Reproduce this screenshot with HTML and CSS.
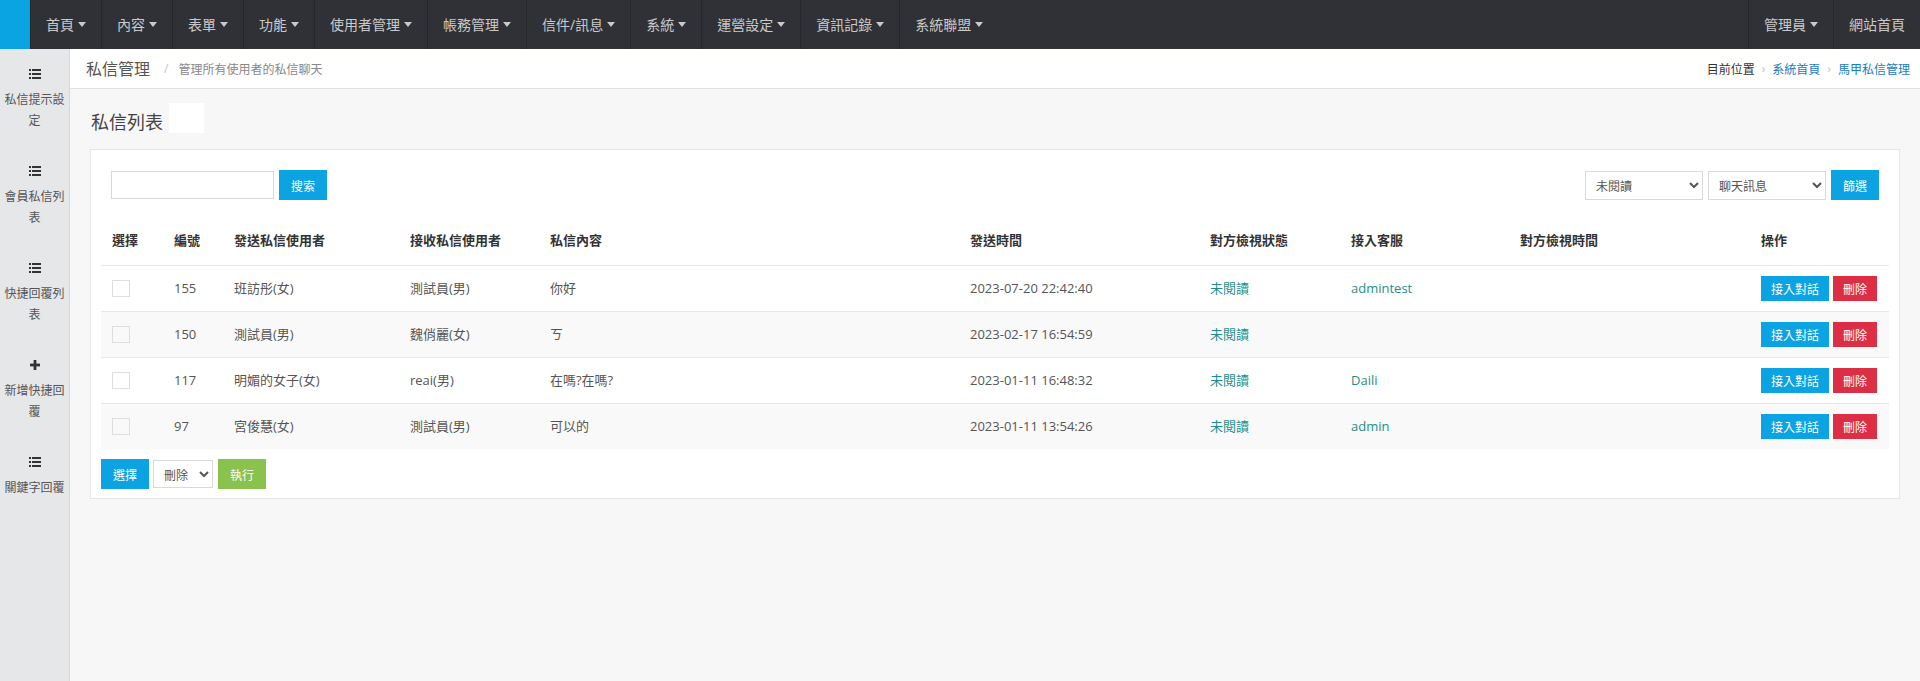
FILE: index.html
```html
<!DOCTYPE html>
<html lang="zh-Hant">
<head>
<meta charset="utf-8">
<title>私信管理</title>
<link rel="stylesheet" href="styles.css">
</head>
<body>
<header class="topnav">
  <div class="brand"></div>
  <nav class="menu">
    <a class="menu-item">首頁<i class="caret"></i></a>
    <a class="menu-item">內容<i class="caret"></i></a>
    <a class="menu-item">表單<i class="caret"></i></a>
    <a class="menu-item">功能<i class="caret"></i></a>
    <a class="menu-item">使用者管理<i class="caret"></i></a>
    <a class="menu-item">帳務管理<i class="caret"></i></a>
    <a class="menu-item">信件/訊息<i class="caret"></i></a>
    <a class="menu-item">系統<i class="caret"></i></a>
    <a class="menu-item">運營設定<i class="caret"></i></a>
    <a class="menu-item">資訊記錄<i class="caret"></i></a>
    <a class="menu-item">系統聯盟<i class="caret"></i></a>
  </nav>
  <nav class="menu menu-right">
    <a class="menu-item">管理員<i class="caret"></i></a>
    <a class="menu-item">網站首頁</a>
  </nav>
</header>

<div class="layout">
  <aside class="sidebar">
    <a class="side-item">
      <svg class="ico" width="12" height="10" viewBox="0 0 12 10"><rect x="0" y="0" width="2" height="2"/><rect x="3" y="0" width="9" height="2"/><rect x="0" y="4" width="2" height="2"/><rect x="3" y="4" width="9" height="2"/><rect x="0" y="8" width="2" height="2"/><rect x="3" y="8" width="9" height="2"/></svg>
      <span class="side-text">私信提示設定</span>
    </a>
    <a class="side-item">
      <svg class="ico" width="12" height="10" viewBox="0 0 12 10"><rect x="0" y="0" width="2" height="2"/><rect x="3" y="0" width="9" height="2"/><rect x="0" y="4" width="2" height="2"/><rect x="3" y="4" width="9" height="2"/><rect x="0" y="8" width="2" height="2"/><rect x="3" y="8" width="9" height="2"/></svg>
      <span class="side-text">會員私信列表</span>
    </a>
    <a class="side-item">
      <svg class="ico" width="12" height="10" viewBox="0 0 12 10"><rect x="0" y="0" width="2" height="2"/><rect x="3" y="0" width="9" height="2"/><rect x="0" y="4" width="2" height="2"/><rect x="3" y="4" width="9" height="2"/><rect x="0" y="8" width="2" height="2"/><rect x="3" y="8" width="9" height="2"/></svg>
      <span class="side-text">快捷回覆列表</span>
    </a>
    <a class="side-item">
      <svg class="ico" width="12" height="10" viewBox="0 0 12 10"><rect x="4.6" y="0" width="2.8" height="10"/><rect x="1" y="3.6" width="10" height="2.8"/></svg>
      <span class="side-text">新增快捷回覆</span>
    </a>
    <a class="side-item">
      <svg class="ico" width="12" height="10" viewBox="0 0 12 10"><rect x="0" y="0" width="2" height="2"/><rect x="3" y="0" width="9" height="2"/><rect x="0" y="4" width="2" height="2"/><rect x="3" y="4" width="9" height="2"/><rect x="0" y="8" width="2" height="2"/><rect x="3" y="8" width="9" height="2"/></svg>
      <span class="side-text">關鍵字回覆</span>
    </a>
  </aside>

  <main class="main">
    <div class="subheader">
      <div class="page-title">
        <span class="title">私信管理</span>
        <span class="slash">/</span>
        <span class="subtitle">管理所有使用者的私信聊天</span>
      </div>
      <div class="crumbs">
        <span class="crumb-here">目前位置</span>
        <span class="crumb-sep">›</span>
        <a class="crumb-link">系統首頁</a>
        <span class="crumb-sep">›</span>
        <a class="crumb-link">馬甲私信管理</a>
      </div>
    </div>

    <div class="content">
      <div class="heading">
        <h2 class="heading-text">私信列表</h2>
        <span class="heading-blank"></span>
      </div>

      <section class="panel">
        <div class="toolbar">
          <div class="search">
            <input class="search-input" type="text">
            <button class="btn btn-blue">搜索</button>
          </div>
          <div class="filters">
            <select class="sel sel-wide"><option>未閱讀</option></select>
            <select class="sel sel-wide"><option>聊天訊息</option></select>
            <button class="btn btn-blue">篩選</button>
          </div>
        </div>

        <table class="grid">
          <colgroup>
            <col class="c1"><col class="c2"><col class="c3"><col class="c4"><col class="c5">
            <col class="c6"><col class="c7"><col class="c8"><col class="c9"><col class="c10">
          </colgroup>
          <thead>
            <tr>
              <th>選擇</th><th>編號</th><th>發送私信使用者</th><th>接收私信使用者</th><th>私信內容</th>
              <th>發送時間</th><th>對方檢視狀態</th><th>接入客服</th><th>對方檢視時間</th><th>操作</th>
            </tr>
          </thead>
          <tbody>
            <tr>
              <td><span class="check"></span></td><td>155</td><td>班訪彤(女)</td><td>測試員(男)</td><td>你好</td>
              <td>2023-07-20 22:42:40</td><td class="teal">未閱讀</td><td class="teal">admintest</td><td></td>
              <td><span class="actions"><button class="btn btn-sm btn-blue">接入對話</button><button class="btn btn-sm btn-red">刪除</button></span></td>
            </tr>
            <tr>
              <td><span class="check"></span></td><td>150</td><td>測試員(男)</td><td>魏俏麗(女)</td><td>ㄎ</td>
              <td>2023-02-17 16:54:59</td><td class="teal">未閱讀</td><td class="teal"></td><td></td>
              <td><span class="actions"><button class="btn btn-sm btn-blue">接入對話</button><button class="btn btn-sm btn-red">刪除</button></span></td>
            </tr>
            <tr>
              <td><span class="check"></span></td><td>117</td><td>明媚的女子(女)</td><td>reai(男)</td><td>在嗎?在嗎?</td>
              <td>2023-01-11 16:48:32</td><td class="teal">未閱讀</td><td class="teal">Daili</td><td></td>
              <td><span class="actions"><button class="btn btn-sm btn-blue">接入對話</button><button class="btn btn-sm btn-red">刪除</button></span></td>
            </tr>
            <tr>
              <td><span class="check"></span></td><td>97</td><td>宮俊慧(女)</td><td>測試員(男)</td><td>可以的</td>
              <td>2023-01-11 13:54:26</td><td class="teal">未閱讀</td><td class="teal">admin</td><td></td>
              <td><span class="actions"><button class="btn btn-sm btn-blue">接入對話</button><button class="btn btn-sm btn-red">刪除</button></span></td>
            </tr>
          </tbody>
        </table>

        <div class="bulk">
          <button class="btn btn-blue">選擇</button>
          <select class="sel sel-small"><option>刪除</option></select>
          <button class="btn btn-green">執行</button>
        </div>
      </section>
    </div>
  </main>
</div>
</body>
</html>
```

FILE: styles.css
```css
* { box-sizing: border-box; }
html, body { margin: 0; padding: 0; }
body {
  font-family: "Open Sans", "Noto Sans CJK TC", sans-serif;
  font-size: 13px;
  color: #555;
  background: #f7f7f7;
}
a { text-decoration: none; cursor: pointer; }

/* top navigation */
.topnav {
  height: 49px;
  display: flex;
  background: #303136;
}
.brand { width: 30px; background: #0aa4e2; }
.menu { display: flex; }
.menu-right { margin-left: auto; }
.menu-item {
  display: flex;
  align-items: center;
  padding: 0 15px;
  border-left: 1px solid #26272b;
  color: #c9c9c9;
  font-size: 14px;
  line-height: 20px;
}
.caret {
  display: inline-block;
  width: 0; height: 0;
  margin-left: 4px;
  border-left: 4px solid transparent;
  border-right: 4px solid transparent;
  border-top: 5px solid #c9c9c9;
}

.layout {
  display: flex;
  min-height: calc(100vh - 49px);
}

/* sidebar */
.sidebar {
  width: 70px;
  flex: none;
  background: #e6e7e9;
  border-right: 1px solid #d6d7d9;
}
.side-item {
  display: flex;
  flex-direction: column;
  align-items: center;
  padding: 20px 4px 15px;
  color: #555;
}
.ico { display: block; fill: #333; margin-bottom: 10px; }
.side-text {
  font-size: 12px;
  line-height: 21px;
  text-align: center;
  word-break: break-all;
  width: 61px;
}

/* main */
.main { flex: 1; display: flex; flex-direction: column; }
.subheader {
  height: 40px;
  background: #fff;
  border-bottom: 1px solid #e2e2e2;
  display: flex;
  align-items: center;
  justify-content: space-between;
  padding: 0 10px 0 16px;
}
.page-title { display: flex; align-items: center; }
.title { font-size: 16px; color: #555; line-height: 22px; }
.slash { color: #c4c4c4; margin: 0 10px 0 14px; font-size: 12px; }
.subtitle { font-size: 12px; color: #888; }
.crumbs { display: flex; align-items: center; font-size: 12px; }
.crumb-here { color: #333; }
.crumb-sep { color: #c0c0c0; margin: 0 7px; }
.crumb-link { color: #1b7cc1; }

.content { padding: 14px 20px 0 20px; }
.heading { display: flex; align-items: flex-start; margin-bottom: 12px; }
.heading-text {
  margin: 0;
  padding: 4px 0 0 1px;
  font-size: 18px;
  font-weight: normal;
  line-height: 30px;
  color: #444;
}
.heading-blank { width: 35px; height: 30px; background: #fff; margin-left: 6px; }

.panel {
  background: #fff;
  border: 1px solid #e6e6e6;
  padding: 20px 10px 9px 10px;
}
.toolbar {
  display: flex;
  justify-content: space-between;
  align-items: center;
  padding: 0 10px 0 10px;
}
.search, .filters { display: flex; align-items: center; }
.search-input {
  width: 163px;
  height: 28px;
  border: 1px solid #d8d8d8;
  margin: 0 5px 0 0;
  padding: 0 6px;
}
.filters .sel { margin-right: 5px; }

.btn {
  border: 0;
  height: 30px;
  width: 48px;
  padding: 0;
  font-family: "Noto Sans CJK TC", sans-serif;
  font-size: 12px;
  color: #fff;
  cursor: pointer;
}
.btn-blue { background: #0ba3e1; }
.btn-green { background: #8bc14d; }
.btn-red { background: #dc2f45; }
.btn-sm { height: 25px; width: auto; padding: 0 10px; }

.sel {
  height: 29px;
  border: 1px solid #d9d9d9;
  background: #fff;
  color: #555;
  font-family: "Noto Sans CJK TC", sans-serif;
  font-size: 12px;
  padding-left: 6px;
}
.sel-wide { width: 118px; }
.sel-small { width: 60px; height: 28px; }

/* table */
.grid {
  width: 100%;
  border-collapse: collapse;
  table-layout: fixed;
  margin-top: 15px;
}
.c1 { width: 62px; } .c2 { width: 60px; } .c3 { width: 176px; } .c4 { width: 140px; }
.c5 { width: 420px; } .c6 { width: 240px; } .c7 { width: 141px; } .c8 { width: 169px; }
.c9 { width: 241px; } .c10 { width: auto; }
.grid th {
  text-align: left;
  font-weight: bold;
  color: #333;
  padding: 15px 11px;
  line-height: 20px;
  font-size: 13px;
  font-family: "Noto Sans CJK TC", sans-serif;
}
.grid td {
  padding: 12px 11px 13px;
  line-height: 20px;
  border-top: 1px solid #e9e9e9;
  white-space: nowrap;
  vertical-align: middle;
}
.grid tbody tr:nth-child(even) td { background: #f9f9f9; }
.teal { color: #1f8e88; }
.check {
  display: block;
  width: 18px;
  height: 17px;
  border: 1px solid #dedede;
}
.actions { display: flex; gap: 4px; height: 20px; align-items: center; }

.bulk {
  display: flex;
  align-items: center;
  margin-top: 10px;
}
.bulk .sel { margin: 0 5px 0 4px; }
```
